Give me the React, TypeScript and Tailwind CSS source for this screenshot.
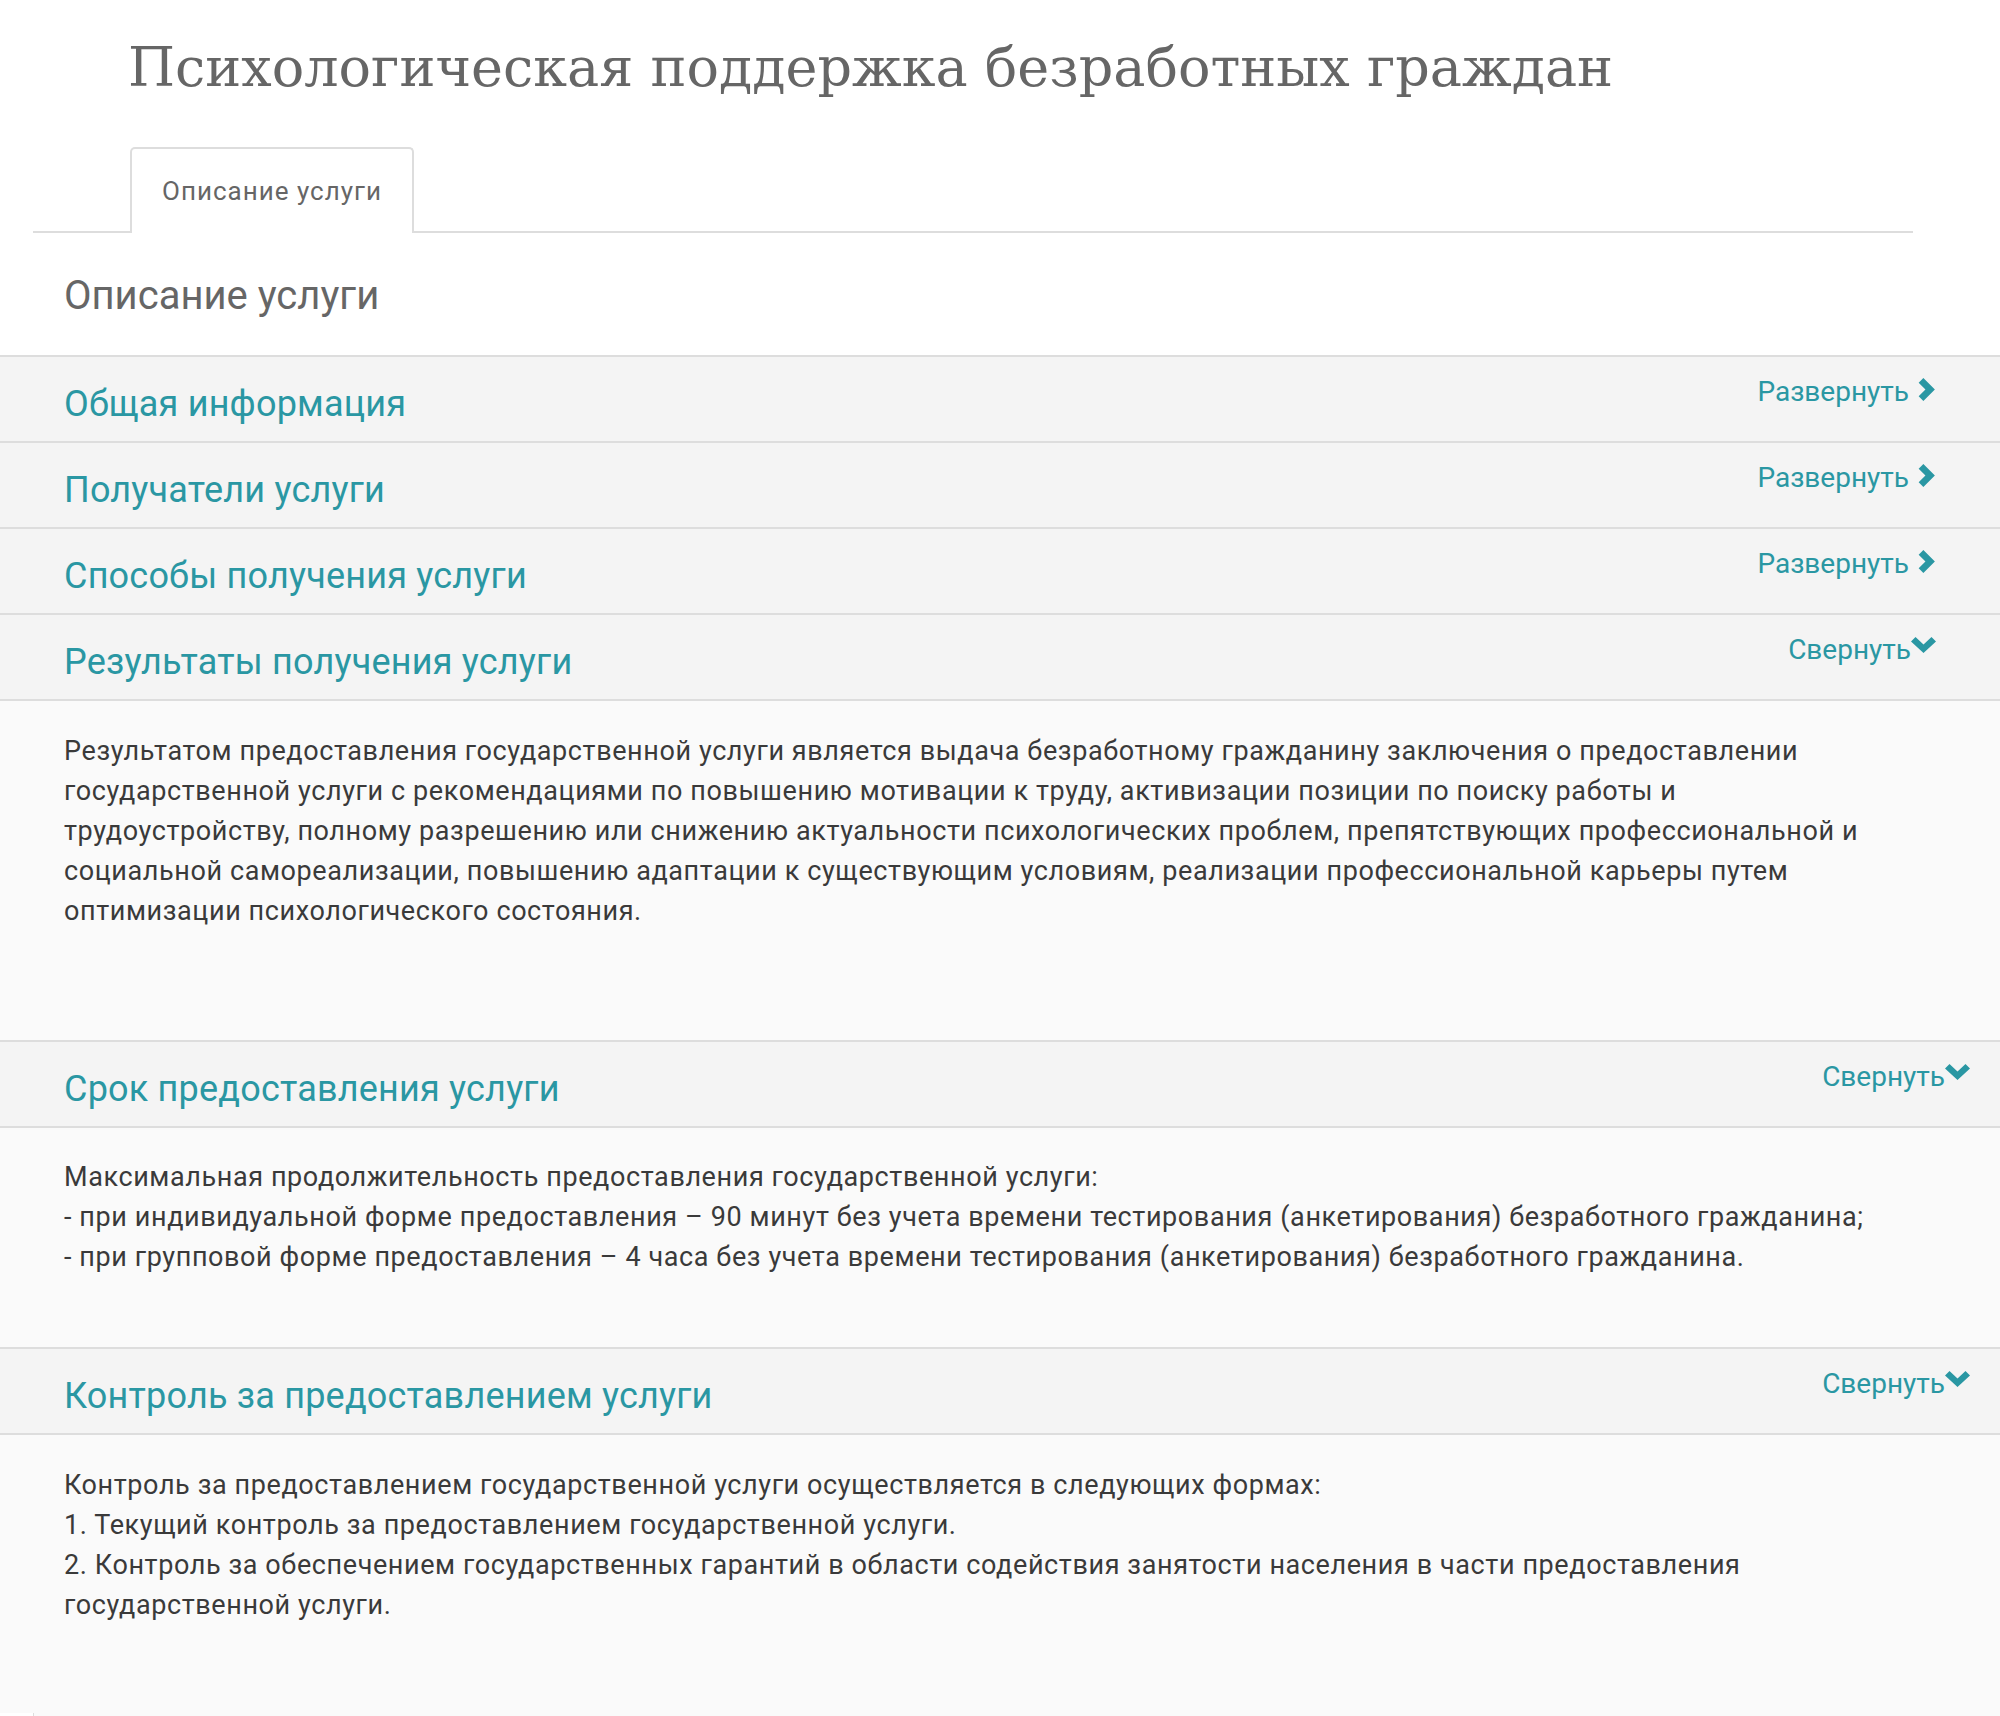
import React from "react";

const teal = "text-[#2a97a3]";

function ChevronRight() {
  return (
    <svg width="19" height="23" viewBox="0 0 18 22" className="shrink-0">
      <path d="M1.5 4.5 L6 0 L17 11 L6 22 L1.5 17.5 L8 11 Z" fill="#2a97a3" />
    </svg>
  );
}

function ChevronDown() {
  return (
    <svg width="25" height="16" viewBox="0 0 25 16" className="mt-[1px] shrink-0">
      <path d="M0 4.5 L4.5 0 L12.5 7.5 L20.5 0 L25 4.5 L12.5 16 Z" fill="#2a97a3" />
    </svg>
  );
}

function Row({ title, open, wide }: { title: string; open?: boolean; wide?: boolean }) {
  return (
    <div
      className={`h-[86px] border-t-2 border-[#dddddd] bg-[#f4f4f4] flex justify-between items-start pl-16 ${
        wide ? "pr-[30px]" : "pr-16"
      }`}
    >
      <div className={`pt-[29px] text-[36px] tracking-[0.2px] leading-none ${teal}`}>{title}</div>
      <div className={`pt-[21px] flex items-start text-[28px] leading-none ${teal}`}>
        {open ? (
          <>
            <span>Свернуть</span>
            <ChevronDown />
          </>
        ) : (
          <>
            <span className="mr-[8px]">Развернуть</span>
            <ChevronRight />
          </>
        )}
      </div>
    </div>
  );
}

function Panel({ children, pt, pb }: { children: React.ReactNode; pt: string; pb: string }) {
  return (
    <div
      className={`border-t-2 border-[#dddddd] bg-[#fafafa] pl-16 pr-[110px] text-[27px] tracking-[0.6px] leading-[40px] text-[#3a3a3a] ${pt} ${pb}`}
    >
      {children}
    </div>
  );
}

export default function App() {
  return (
    <div
      className="w-[2000px] h-[1716px] bg-white overflow-hidden"
      style={{ fontFamily: "Roboto, 'Liberation Sans', sans-serif" }}
    >
      <h1
        className="pl-[128px] pt-[41px] text-[54px] leading-none text-[#666666]"
        style={{ fontFamily: "'DejaVu Serif', 'Liberation Serif', serif" }}
      >
        Психологическая поддержка безработных граждан
      </h1>

      <div className="mt-[52px] ml-[33px] w-[1880px] border-b-2 border-[#dddddd] flex">
        <div className="ml-[97px] -mb-[2px] bg-white border-2 border-b-0 border-[#dddddd] rounded-t-[5px] px-[30px] pt-[29px] pb-[29px] text-[26px] tracking-[1px] leading-none text-[#666666]">
          Описание услуги
        </div>
      </div>

      <h2 className="mt-[43px] pl-16 text-[40px] leading-none text-[#666666]">Описание услуги</h2>

      <div className="mt-[39px]">
        <Row title="Общая информация" />
        <Row title="Получатели услуги" />
        <Row title="Способы получения услуги" />
        <Row title="Результаты получения услуги" open />
        <Panel pt="pt-[30px]" pb="pb-[109px]">
          Результатом предоставления государственной услуги является выдача безработному гражданину
          заключения о предоставлении государственной услуги с рекомендациями по повышению мотивации к
          труду, активизации позиции по поиску работы и трудоустройству, полному разрешению или снижению
          актуальности психологических проблем, препятствующих профессиональной и социальной
          самореализации, повышению адаптации к существующим условиям, реализации профессиональной
          карьеры путем оптимизации психологического состояния.
        </Panel>
        <Row title="Срок предоставления услуги" open wide />
        <Panel pt="pt-[29px]" pb="pb-[70px]">
          <p>Максимальная продолжительность предоставления государственной услуги:</p>
          <p>
            - при индивидуальной форме предоставления – 90 минут без учета времени тестирования
            (анкетирования) безработного гражданина;
          </p>
          <p>
            - при групповой форме предоставления – 4 часа без учета времени тестирования (анкетирования)
            безработного гражданина.
          </p>
        </Panel>
        <Row title="Контроль за предоставлением услуги" open wide />
        <Panel pt="pt-[30px]" pb="pb-[88px]">
          <p>Контроль за предоставлением государственной услуги осуществляется в следующих формах:</p>
          <p>1. Текущий контроль за предоставлением государственной услуги.</p>
          <p>
            2. Контроль за обеспечением государственных гарантий в области содействия занятости населения
            в части предоставления государственной услуги.
          </p>
        </Panel>
        <div className="h-[3px] flex bg-[#fafafa]">
          <div className="w-[34px] bg-white border-r border-[#dddddd]" />
        </div>
      </div>
    </div>
  );
}
